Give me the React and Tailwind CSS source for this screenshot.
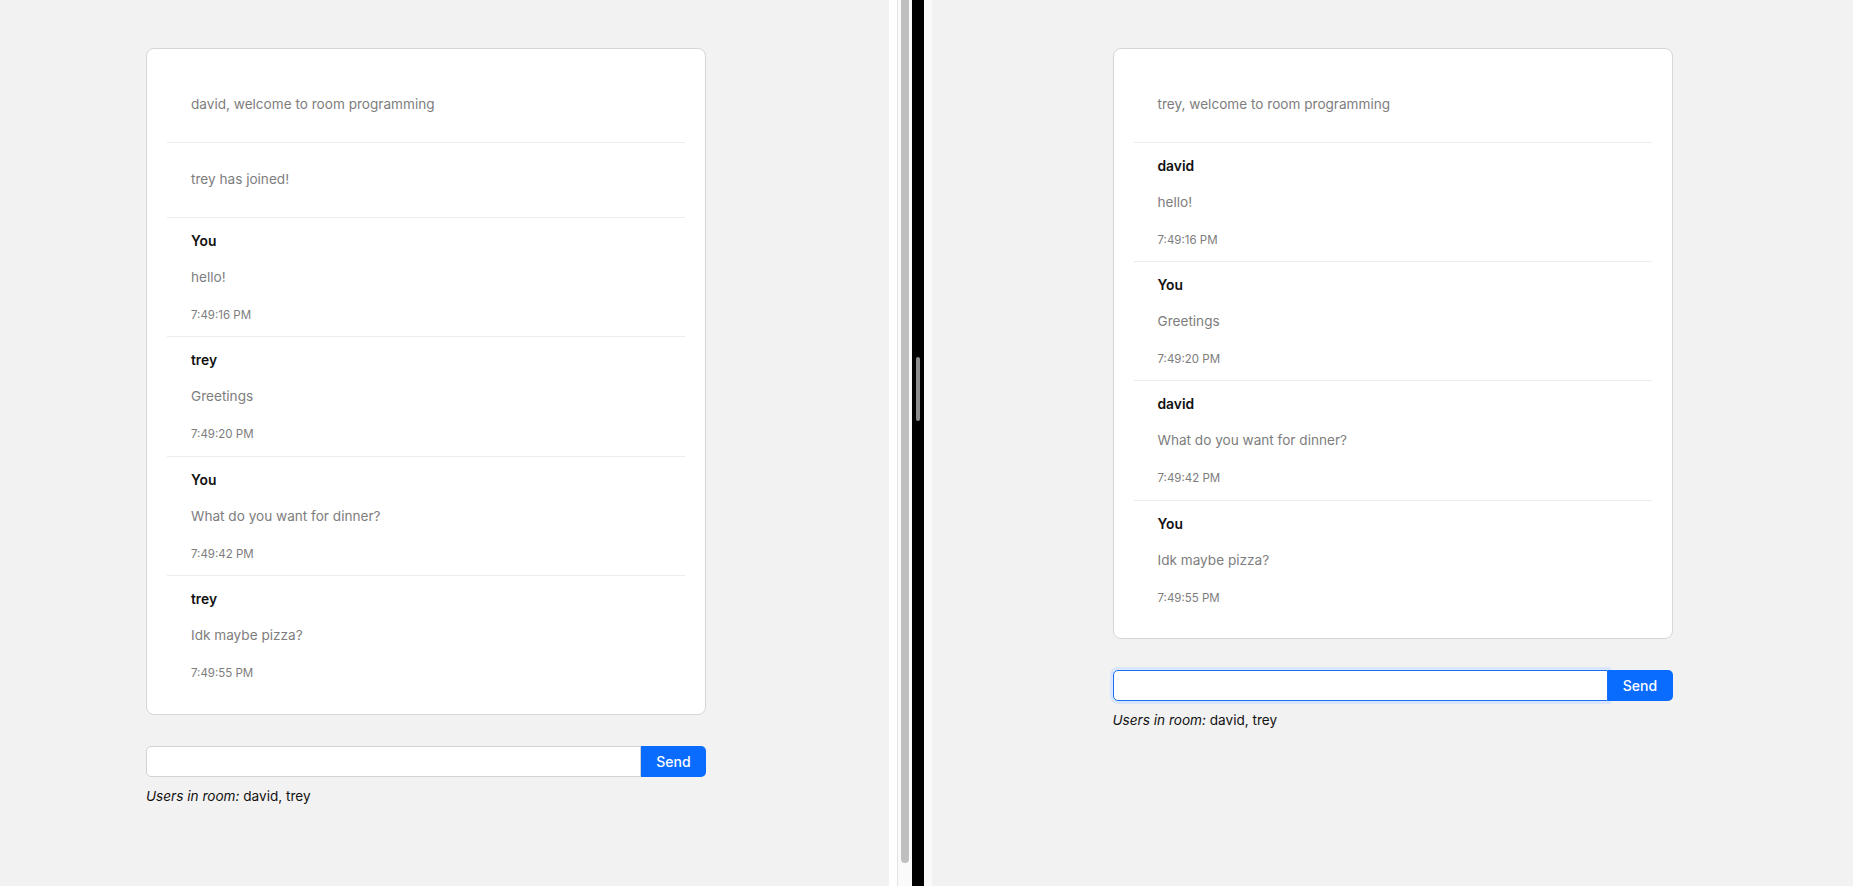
import React from 'react';

const leftMessages = [
  { type: 'system', text: 'david, welcome to room programming' },
  { type: 'system', text: 'trey has joined!' },
  { type: 'chat', user: 'You', text: 'hello!', time: '7:49:16 PM' },
  { type: 'chat', user: 'trey', text: 'Greetings', time: '7:49:20 PM' },
  { type: 'chat', user: 'You', text: 'What do you want for dinner?', time: '7:49:42 PM' },
  { type: 'chat', user: 'trey', text: 'Idk maybe pizza?', time: '7:49:55 PM' },
];

const rightMessages = [
  { type: 'system', text: 'trey, welcome to room programming' },
  { type: 'chat', user: 'david', text: 'hello!', time: '7:49:16 PM' },
  { type: 'chat', user: 'You', text: 'Greetings', time: '7:49:20 PM' },
  { type: 'chat', user: 'david', text: 'What do you want for dinner?', time: '7:49:42 PM' },
  { type: 'chat', user: 'You', text: 'Idk maybe pizza?', time: '7:49:55 PM' },
];

function MessageRow({ msg, last }) {
  const border = last ? '' : 'border-b border-[#ececec]';
  if (msg.type === 'system') {
    return (
      <li className={`h-[75.5px] flex items-center px-[24px] ${border}`}>
        <p className="text-[13.6px] leading-[21px] text-[#7d7d7d]">{msg.text}</p>
      </li>
    );
  }
  return (
    <li className={`h-[119.4px] pt-[13px] px-[24px] ${border}`}>
      <div className="text-[13.8px] leading-[21px] font-semibold text-[#111]">{msg.user}</div>
      <p className="mt-[15px] text-[13.6px] leading-[21px] text-[#7d7d7d]">{msg.text}</p>
      <div className="mt-[18px] text-[11.5px] leading-[18px] text-[#7d7d7d]">{msg.time}</div>
    </li>
  );
}

function ChatRoom({ messages, focused }) {
  return (
    <div className="w-[560px]">
      <div className="bg-white border border-[#d6d6d6] rounded-[8px] px-[20px] pt-[18px] pb-[18px]">
        <ul>
          {messages.map((msg, idx) => (
            <MessageRow key={idx} msg={msg} last={idx === messages.length - 1} />
          ))}
        </ul>
      </div>

      <form className="flex mt-[31px] h-[31px]" onSubmit={(e) => e.preventDefault()}>
        <input
          type="text"
          className={
            focused
              ? 'flex-1 bg-white rounded-l-[5px] border border-[#1a6ff4] ring-[3px] ring-[#d9e6fb] outline-none'
              : 'flex-1 bg-white rounded-l-[5px] border border-[#d3d3d3] outline-none'
          }
        />
        <button
          type="submit"
          className="w-[65px] bg-[#0a6cff] text-white text-[14px] font-medium rounded-r-[5px]"
        >
          Send
        </button>
      </form>

      <p className="mt-[9px] text-[13.6px] leading-[21px] text-[#111]">
        <em>Users in room:</em> david, trey
      </p>
    </div>
  );
}

export default function App() {
  return (
    <div
      className="flex h-[886px] w-[1853px] overflow-hidden bg-[#f2f2f2]"
      style={{ fontFamily: 'Inter, "Noto Sans", sans-serif' }}
    >
      {/* Left window */}
      <div className="w-[889px] shrink-0 pl-[146px] pt-[48px]">
        <ChatRoom messages={leftMessages} />
      </div>

      {/* Scrollbar */}
      <div className="w-[8px] shrink-0 bg-white" />
      <div className="w-[1px] shrink-0 bg-[#e3e3e3]" />
      <div className="w-[14px] shrink-0 bg-[#fafafa] pl-[3px] pr-[3px]">
        <div className="w-[8px] h-[863px] bg-[#bfbfbf] rounded-b-full" />
      </div>

      {/* Split divider */}
      <div className="w-[12px] shrink-0 bg-black flex justify-center pt-[357px]">
        <div className="w-[4px] h-[64px] rounded-full bg-[#8c8c8c]" />
      </div>
      <div className="w-[8px] shrink-0 bg-[#fafafa]" />

      {/* Right window */}
      <div className="flex-1 flex justify-center pt-[48px]">
        <ChatRoom messages={rightMessages} focused />
      </div>
    </div>
  );
}
